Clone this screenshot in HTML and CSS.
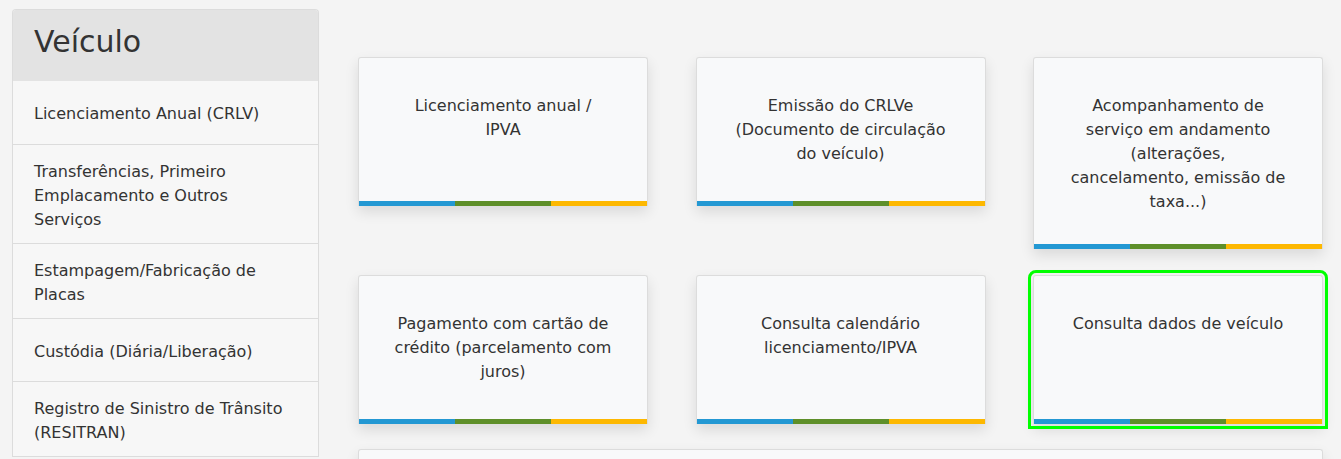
FILE: index.html
```html
<!DOCTYPE html>
<html lang="pt-BR">
<head>
  <meta charset="UTF-8" />
  <meta name="viewport" content="width=device-width, initial-scale=1.0" />
  <title>Veículo</title>
  <link rel="stylesheet" href="styles.css">
</head>
<body>
  <div class="page">
    <aside class="sidebar">
      <h2 class="sidebar-title">Veículo</h2>
      <ul class="menu">
        <li class="menu-item">Licenciamento Anual (CRLV)</li>
        <li class="menu-item">Transferências, Primeiro Emplacamento e Outros Serviços</li>
        <li class="menu-item">Estampagem/Fabricação de Placas</li>
        <li class="menu-item">Custódia (Diária/Liberação)</li>
        <li class="menu-item">Registro de Sinistro de Trânsito (RESITRAN)</li>
      </ul>
    </aside>

    <main class="services">
      <div class="grid">
        <a class="card">
          <span class="card-text">Licenciamento anual /<br>IPVA</span>
          <span class="stripe"><i class="blue"></i><i class="green"></i><i class="yellow"></i></span>
        </a>
        <a class="card">
          <span class="card-text">Emissão do CRLVe (Documento de circulação do veículo)</span>
          <span class="stripe"><i class="blue"></i><i class="green"></i><i class="yellow"></i></span>
        </a>
        <a class="card">
          <span class="card-text">Acompanhamento de serviço em andamento (alterações, cancelamento, emissão de taxa...)</span>
          <span class="stripe"><i class="blue"></i><i class="green"></i><i class="yellow"></i></span>
        </a>
        <a class="card">
          <span class="card-text">Pagamento com cartão de crédito (parcelamento com juros)</span>
          <span class="stripe"><i class="blue"></i><i class="green"></i><i class="yellow"></i></span>
        </a>
        <a class="card">
          <span class="card-text">Consulta calendário licenciamento/IPVA</span>
          <span class="stripe"><i class="blue"></i><i class="green"></i><i class="yellow"></i></span>
        </a>
        <a class="card selected">
          <span class="card-text">Consulta dados de veículo</span>
          <span class="stripe"><i class="blue"></i><i class="green"></i><i class="yellow"></i></span>
        </a>
        <div class="card wide"></div>
      </div>
    </main>
  </div>
</body>
</html>
```

FILE: styles.css
```css
:root {
  --bg: #f4f4f4;
  --side-bg: #f7f7f7;
  --head-bg: #e3e3e3;
  --line: #dcdcdc;
  --card-bg: #f8f9fa;
  --text: #333333;
  --blue: #2398d3;
  --green: #5e8f29;
  --yellow: #fdb801;
}

html, body {
  height: 100%;
  overflow: hidden;
}

body {
  margin: 0;
  background-color: var(--bg);
  color: var(--text);
  font-family: "DejaVu Sans", Verdana, sans-serif;
  font-size: 16px;
  line-height: 24px;
}

.page {
  display: flex;
  align-items: flex-start;
  padding: 9px 0 0 12px;
}

/* menu lateral */
.sidebar {
  width: 307px;
  flex-shrink: 0;
  box-sizing: border-box;
  background-color: var(--side-bg);
  border: 1px solid var(--line);
  border-bottom: none;
  border-radius: 4px 4px 0 0;
  overflow: hidden;
}

.sidebar-title {
  margin: 0;
  padding: 15px 21px 23px;
  background-color: var(--head-bg);
  font-size: 30px;
  line-height: 33px;
  font-weight: normal;
}

.menu {
  list-style: none;
  margin: 0;
  padding: 0;
}

.menu-item {
  display: flex;
  align-items: center;
  min-height: 63.5px;
  box-sizing: border-box;
  padding: 15px 21px 11px;
  border-bottom: 1px solid var(--line);
}

/* cartões de serviço */
.services {
  padding: 48px 0 0 39px;
}

.grid {
  display: grid;
  grid-template-columns: repeat(3, 290px);
  column-gap: 47.5px;
  row-gap: 25.5px;
  align-items: start;
}

.card {
  display: flex;
  flex-direction: column;
  min-height: 149px;
  box-sizing: border-box;
  background-color: var(--card-bg);
  border: 1px solid var(--line);
  border-bottom: none;
  border-radius: 3px 3px 0 0;
  box-shadow: 0 6px 14px rgba(0, 0, 0, 0.11);
  color: var(--text);
  text-decoration: none;
  cursor: pointer;
}

.card-text {
  flex: 1;
  padding: 36px 35px 30px;
  text-align: center;
}

.stripe {
  display: flex;
  height: 5px;
}

.stripe i { flex: 1; }
.blue { background-color: var(--blue); }
.green { background-color: var(--green); }
.yellow { background-color: var(--yellow); }

.selected {
  outline: 3px solid #00ff00;
  outline-offset: 2px;
}

.wide {
  grid-column: 1 / -1;
}
```
